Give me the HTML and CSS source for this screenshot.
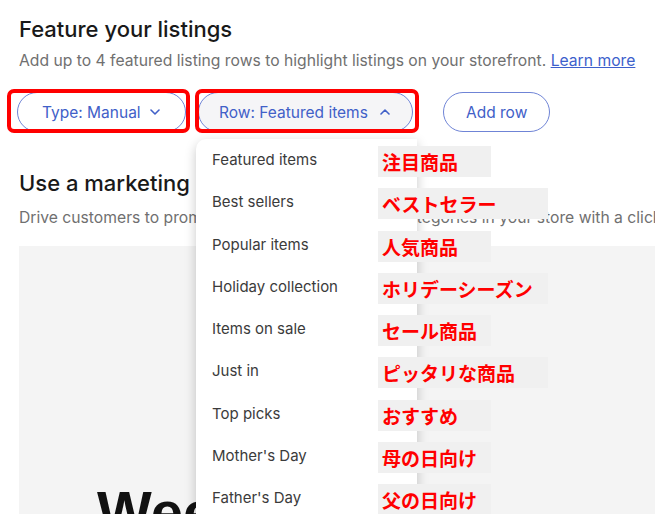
FILE: index.html
```html
<!DOCTYPE html>
<html lang="en">
<head>
  <meta charset="UTF-8">
  <title>Storefront settings</title>
  <link rel="stylesheet" href="styles.css">
</head>
<body>
  <main class="page">
    <section class="feature">
      <h2 class="title">Feature your listings</h2>
      <p class="note">Add up to 4 featured listing rows to highlight listings on your storefront. <a href="#">Learn more</a></p>

      <div class="toolbar">
        <div class="pill-wrap">
          <button class="pill pill-type">Type: Manual
            <svg class="chev" viewBox="0 0 10 6" width="10" height="6"><path d="M1 1l4 4 4-4"/></svg>
          </button>
          <span class="mark mark-type"></span>
        </div>

        <div class="pill-wrap">
          <button class="pill pill-row">Row: Featured items
            <svg class="chev" viewBox="0 0 10 6" width="10" height="6"><path d="M1 5l4-4 4 4"/></svg>
          </button>
          <span class="mark mark-row"></span>

          <ul class="menu">
            <li><span>Featured items</span><span class="jp">注目商品</span></li>
            <li><span>Best sellers</span><span class="jp wide">ベストセラー</span></li>
            <li><span>Popular items</span><span class="jp">人気商品</span></li>
            <li><span>Holiday collection</span><span class="jp wide">ホリデーシーズン</span></li>
            <li><span>Items on sale</span><span class="jp">セール商品</span></li>
            <li><span>Just in</span><span class="jp wide">ピッタリな商品</span></li>
            <li><span>Top picks</span><span class="jp">おすすめ</span></li>
            <li><span>Mother's Day</span><span class="jp">母の日向け</span></li>
            <li><span>Father's Day</span><span class="jp">父の日向け</span></li>
          </ul>
        </div>

        <button class="pill pill-add">Add row</button>
      </div>
    </section>

    <section class="marketing">
      <h2 class="title">Use a marketing banner</h2>
      <p class="note nowrap">Drive customers to promotions, featured listings or categories in your store with a click</p>
      <div class="banner">
        <span class="banner-text">Weekend sale</span>
      </div>
    </section>
  </main>
</body>
</html>
```

FILE: styles.css
```css
html, body {
  margin: 0;
  height: 514px;
  overflow: hidden;
  background: #fff;
}
body {
  font-family: Inter, "Noto Sans", sans-serif;
  color: #191919;
}
.page {
  padding: 15px 0 0 19px;
}
.title {
  margin: 0;
  font-size: 22px;
  line-height: 28px;
  font-weight: 500;
}
.note {
  margin: 8px 0 0;
  font-size: 15.7px;
  line-height: 20px;
  color: #707070;
}
.note a {
  color: #3d5fcc;
}
.nowrap {
  white-space: nowrap;
}

/* toolbar with pills */
.toolbar {
  display: flex;
  align-items: center;
  gap: 12px;
  margin: 21px 0 0 -2px;
}
.pill-wrap {
  position: relative;
}
.pill {
  display: flex;
  align-items: center;
  gap: 9px;
  height: 40px;
  padding: 0 24px;
  border: 1px solid #6f84d6;
  border-radius: 20px;
  background: #fff;
  color: #4160c8;
  font-family: inherit;
  font-size: 15.5px;
  white-space: nowrap;
}
.pill-type {
  width: 169px;
}
.pill-row {
  width: 215px;
  padding: 0 18px 0 20px;
  gap: 12px;
  background: #f5f5f7;
}
.pill-add {
  margin-left: 18px;
  padding: 0 22px;
}
.chev {
  flex: none;
  fill: none;
  stroke: currentColor;
  stroke-width: 1.6;
  stroke-linecap: round;
  stroke-linejoin: round;
}
.mark {
  position: absolute;
  top: -3px;
  bottom: -1px;
  border: 4px solid #f00;
  border-radius: 7px;
  pointer-events: none;
}
.mark-type {
  left: -10px;
  right: -4px;
}
.mark-row {
  left: -3px;
  right: -6px;
}

/* dropdown */
.menu {
  position: absolute;
  top: calc(100% + 7px);
  left: -2px;
  width: 221px;
  margin: 0;
  padding: 0;
  list-style: none;
  background: #fff;
  border-radius: 10px 0 0 0;
  box-shadow: 0 4px 12px rgba(0, 0, 0, 0.22);
  z-index: 2;
}
.menu li {
  position: relative;
  height: 42.25px;
  line-height: 42px;
  padding-left: 16px;
  font-size: 15px;
  color: #3b3b3b;
}
.jp {
  position: absolute;
  top: 7px;
  left: 182px;
  width: 113px;
  height: 31px;
  padding-left: 4px;
  box-sizing: border-box;
  background: #f0f0f0;
  color: #f00;
  font-family: "Noto Sans CJK JP", sans-serif;
  font-weight: 700;
  font-size: 19px;
  line-height: 31px;
  white-space: nowrap;
}
.jp.wide {
  width: 170px;
}

/* marketing banner */
.marketing {
  margin-top: 37px;
}
.marketing .note {
  margin-top: 11px;
}
.banner {
  margin-top: 18px;
  height: 400px;
  padding: 232px 0 0 78px;
  background: #f4f4f4;
}
.banner-text {
  font-family: "Liberation Sans", Arial, sans-serif;
  font-size: 58px;
  font-weight: 700;
  color: #111;
  white-space: nowrap;
}
```
